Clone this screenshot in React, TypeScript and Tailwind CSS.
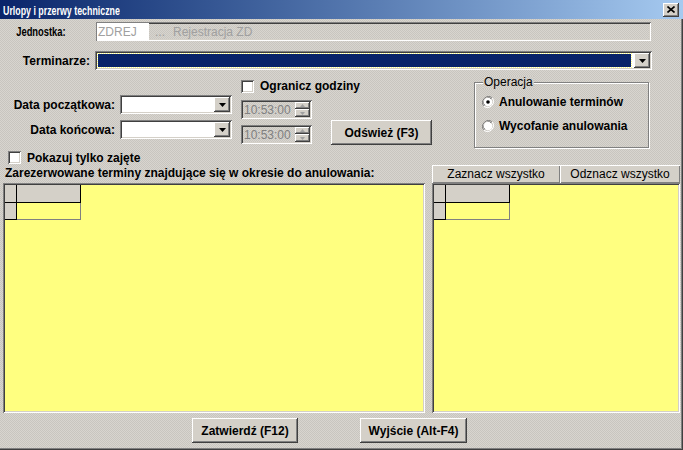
import React from 'react';

const raised =
  'bg-[#d4d0c8] shadow-[inset_-1px_-1px_#404040,inset_1px_1px_#ffffff,inset_-2px_-2px_#808080,inset_2px_2px_#d4d0c8]';
const sunken =
  'shadow-[inset_1px_1px_#808080,inset_-1px_-1px_#ffffff,inset_2px_2px_#404040,inset_-2px_-2px_#d4d0c8]';
const dither = 'bg-[repeating-conic-gradient(#d8d5cf_0_25%,#c8c5bf_0_50%)] bg-[length:2px_2px]';

function DownArrow({ color = '#000' }: { color?: string }) {
  return (
    <svg width="7" height="4" viewBox="0 0 7 4">
      <path d="M0 0h7L3.5 4z" fill={color} />
    </svg>
  );
}

function DropButton({ className = '' }: { className?: string }) {
  return (
    <div className={`${raised} w-[16px] h-[15px] flex items-center justify-center ${className}`}>
      <DownArrow />
    </div>
  );
}

function Combo({ w }: { w: number }) {
  return (
    <div className={`bg-white ${sunken} h-[19px] flex items-center justify-end pr-[2px]`} style={{ width: w }}>
      <DropButton />
    </div>
  );
}

function Spinner() {
  return (
    <div className={`${sunken} ${dither} w-[71px] h-[19px] flex items-center pl-[3px] pr-[2px]`}>
      <span className="flex-1 text-[12px] text-[#808080] font-normal">10:53:00</span>
      <div className="flex flex-col">
        <div className={`${raised} w-[15px] h-[7px] flex items-center justify-center`}>
          <svg width="5" height="3" viewBox="0 0 5 3"><path d="M0 3h5L2.5 0z" fill="#a0a0a0" /></svg>
        </div>
        <div className={`${raised} w-[15px] h-[8px] flex items-center justify-center`}>
          <svg width="5" height="3" viewBox="0 0 5 3"><path d="M0 0h5L2.5 3z" fill="#a0a0a0" /></svg>
        </div>
      </div>
    </div>
  );
}

function Checkbox({ label }: { label: string }) {
  return (
    <div className="flex items-center gap-[6px] whitespace-nowrap">
      <div className={`bg-white ${sunken} w-[13px] h-[13px]`} />
      <span className="font-bold text-[12px]">{label}</span>
    </div>
  );
}

function Radio({ label, checked }: { label: string; checked?: boolean }) {
  return (
    <div className="flex items-center gap-[5px] whitespace-nowrap">
      <svg width="12" height="12" viewBox="0 0 12 12">
        <path d="M10.2 1.8A6 6 0 0 0 1.8 10.2" fill="none" stroke="#808080" />
        <path d="M9.3 2.7A4.8 4.8 0 0 0 2.7 9.3" fill="none" stroke="#404040" />
        <path d="M1.8 10.2A6 6 0 0 0 10.2 1.8" fill="none" stroke="#ffffff" />
        <circle cx="6" cy="6" r="4.3" fill="#ffffff" />
        {checked && <circle cx="6" cy="6" r="1.8" fill="#000" />}
      </svg>
      <span className="font-bold text-[12px]">{label}</span>
    </div>
  );
}

function DataGrid({ w }: { w: number }) {
  return (
    <div className={`bg-[#ffff80] ${sunken} h-[230px] p-[2px]`} style={{ width: w }}>
      <div className="flex">
        <div className="w-[12px] h-[18px] bg-[#d4d0c8] border-r border-b border-black" />
        <div className="w-[64px] h-[18px] bg-[#d4d0c8] border-r border-b border-black" />
      </div>
      <div className="flex">
        <div className="w-[12px] h-[17px] bg-[#d4d0c8] border-r border-b border-black" />
        <div className="w-[64px] h-[17px] border-r border-b border-[#808080]" />
      </div>
    </div>
  );
}

function Button({ label, w }: { label: string; w: number }) {
  return (
    <div className={`${raised} h-[25px] flex items-center justify-center font-bold text-[12px]`} style={{ width: w }}>
      {label}
    </div>
  );
}

export default function App() {
  return (
    <div
      className={`w-[683px] h-[450px] ${dither} shadow-[inset_-1px_-1px_#404040,inset_-2px_-2px_#808080] text-black overflow-hidden flex flex-col`}
      style={{ fontFamily: '"Liberation Sans", Arial, sans-serif' }}
    >
      {/* title bar */}
      <div className="h-[19px] bg-gradient-to-r from-[#0a246a] to-[#a6caf0] flex items-center pl-[3px] pr-[4px]">
        <div className="flex-1">
          <span className="inline-block origin-left scale-x-[0.68] text-white font-bold text-[13px] whitespace-nowrap">
            Urlopy i przerwy techniczne
          </span>
        </div>
        <div className={`${raised} w-[16px] h-[14px] flex items-center justify-center`}>
          <svg width="8" height="7" viewBox="0 0 8 7">
            <path d="M0.5 0.5L7.5 6.5M7.5 0.5L0.5 6.5" stroke="#000" strokeWidth="1.6" />
          </svg>
        </div>
      </div>

      {/* Jednostka */}
      <div className="mt-[3px] flex items-center h-[19px]">
        <div className="w-[66px] flex justify-end">
          <span className="inline-block origin-right scale-x-[0.72] font-bold text-[13px] whitespace-nowrap">Jednostka:</span>
        </div>
        <div className={`ml-[30px] w-[555px] h-[19px] ${sunken} flex items-center pl-[1px]`}>
          <div className="bg-white w-[52px] h-[17px] flex items-center pl-[1px] text-[12px] text-[#a0a0a0]">ZDREJ</div>
          <span className="ml-[6px] text-[12px] text-[#a0a0a0]">...</span>
          <span className="ml-[8px] text-[12px] text-[#a0a0a0]">Rejestracja ZD</span>
        </div>
      </div>

      {/* Terminarze */}
      <div className="mt-[10px] flex items-center h-[19px]">
        <span className="w-[90px] text-right font-bold text-[12px]">Terminarze:</span>
        <div className={`ml-[5px] w-[557px] h-[19px] bg-white ${sunken} flex items-center p-[3px] pr-[2px]`}>
          <div className="flex-1 h-[13px] bg-[#0a246a] outline-1 outline-dotted outline-[#ffff80]" />
          <DropButton className="ml-[3px]" />
        </div>
      </div>

      {/* middle area */}
      <div className="flex h-[78px]">
        <div className="flex flex-col mt-[25px] gap-[6px]">
          <div className="flex items-center">
            <span className="w-[115px] text-right font-bold text-[12px]">Data początkowa:</span>
            <div className="ml-[5px]"><Combo w={112} /></div>
          </div>
          <div className="flex items-center">
            <span className="w-[115px] text-right font-bold text-[12px]">Data końcowa:</span>
            <div className="ml-[5px]"><Combo w={112} /></div>
          </div>
        </div>
        <div className="ml-[9px] flex flex-col">
          <div className="mt-[7px]"><Checkbox label="Ogranicz godziny" /></div>
          <div className="flex mt-[5px]">
            <div className="flex flex-col gap-[6px]">
              <Spinner />
              <Spinner />
            </div>
            <div className="ml-[19px] mt-[20px]"><Button label="Odśwież (F3)" w={101} /></div>
          </div>
        </div>
        <div className="ml-[42px] mt-[12px] relative w-[175px] h-[66px] border border-[#808080] shadow-[1px_1px_#ffffff,inset_1px_1px_#ffffff]">
          <span className={`absolute left-[8px] -top-[7px] px-[1px] ${dither} text-[12px] leading-[13px]`}>Operacja</span>
          <div className="flex flex-col gap-[6px] pl-[7px] pt-[10px]">
            <Radio label="Anulowanie terminów" checked />
            <Radio label="Wycofanie anulowania" />
          </div>
        </div>
      </div>

      {/* Pokazuj */}
      <div className="mt-[3px] ml-[8px] h-[13px] flex items-center">
        <Checkbox label="Pokazuj tylko zajęte" />
      </div>

      {/* label + select buttons */}
      <div className="mt-[1px] flex h-[18px]">
        <span className="ml-[5px] w-[427px] font-bold text-[12px] leading-[16px]">
          Zarezerwowane terminy znajdujące się w okresie do anulowania:
        </span>
        <div className="w-[128px] h-[18px] bg-[#d4d0c8] shadow-[inset_1px_1px_#ffffff,inset_-1px_-1px_#808080] flex items-center justify-center text-[12px]">
          Zaznacz wszystko
        </div>
        <div className="w-[120px] h-[18px] bg-[#d4d0c8] shadow-[inset_1px_1px_#ffffff,inset_-1px_-1px_#808080] flex items-center justify-center text-[12px]">
          Odznacz wszystko
        </div>
      </div>

      {/* grids */}
      <div className="flex">
        <div className="ml-[3px]"><DataGrid w={422} /></div>
        <div className="ml-[7px]"><DataGrid w={248} /></div>
      </div>

      {/* bottom buttons */}
      <div className="mt-[5px] flex">
        <div className="ml-[192px]"><Button label="Zatwierdź (F12)" w={106} /></div>
        <div className="ml-[62px]"><Button label="Wyjście (Alt-F4)" w={107} /></div>
      </div>
    </div>
  );
}
